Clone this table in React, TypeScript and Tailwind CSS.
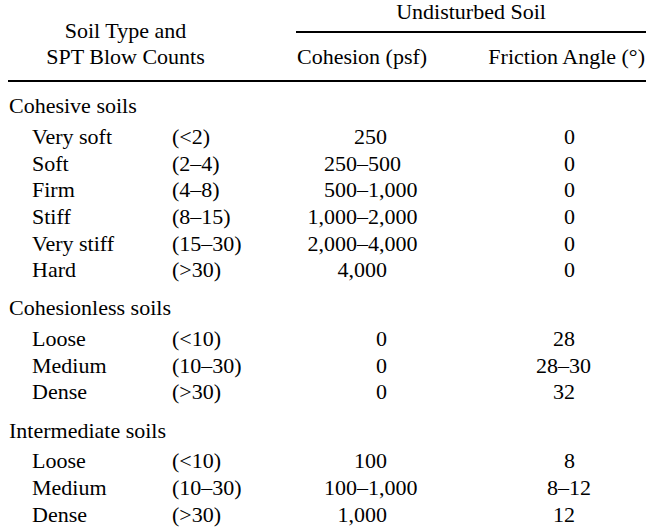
// Soil strength parameters by soil type and SPT blow counts

type Row = { name: string; spt: string; cohesion: string; friction: string }
type Group = { title: string; rows: Row[] }

const GROUPS: Group[] = [
  {
    title: 'Cohesive soils',
    rows: [
      { name: 'Very soft', spt: '(<2)', cohesion: '250', friction: '0' },
      { name: 'Soft', spt: '(2–4)', cohesion: '250–500', friction: '0' },
      { name: 'Firm', spt: '(4–8)', cohesion: '500–1,000', friction: '0' },
      { name: 'Stiff', spt: '(8–15)', cohesion: '1,000–2,000', friction: '0' },
      { name: 'Very stiff', spt: '(15–30)', cohesion: '2,000–4,000', friction: '0' },
      { name: 'Hard', spt: '(>30)', cohesion: '4,000', friction: '0' },
    ],
  },
  {
    title: 'Cohesionless soils',
    rows: [
      { name: 'Loose', spt: '(<10)', cohesion: '0', friction: '28' },
      { name: 'Medium', spt: '(10–30)', cohesion: '0', friction: '28–30' },
      { name: 'Dense', spt: '(>30)', cohesion: '0', friction: '32' },
    ],
  },
  {
    title: 'Intermediate soils',
    rows: [
      { name: 'Loose', spt: '(<10)', cohesion: '100', friction: '8' },
      { name: 'Medium', spt: '(10–30)', cohesion: '100–1,000', friction: '8–12' },
      { name: 'Dense', spt: '(>30)', cohesion: '1,000', friction: '12' },
    ],
  },
]

// Values line up on the en dash; single values sit flush right
function DashValue({ value, col }: { value: string; col: 'cohesion' | 'friction' }) {
  const [first, rest] = value.split('–')
  const isRange = rest !== undefined
  let box = ''
  if (col === 'cohesion') box = isRange ? 'w-[67px]' : 'w-[97px]'
  else box = isRange ? 'w-[88px]' : 'w-[105px]'

  return (
    <div className="flex whitespace-nowrap">
      <span className={`${box} text-right shrink-0`}>{first}</span>
      {isRange && <span>–{rest}</span>}
    </div>
  )
}

function GroupBlock({ group }: { group: Group }) {
  return (
    <div className="mt-[11.5px]">
      <div className="pl-[9px] mb-[4px]">{group.title}</div>
      {group.rows.map(r => (
        <div key={r.name + r.spt} className="flex">
          <div className="pl-[32px] w-[172px] shrink-0">{r.name}</div>
          <div className="w-[118px] shrink-0">{r.spt}</div>
          <div className="w-[180px] shrink-0">
            <DashValue value={r.cohesion} col="cohesion" />
          </div>
          <div className="flex-1">
            <DashValue value={r.friction} col="friction" />
          </div>
        </div>
      ))}
    </div>
  )
}

export default function App() {
  return (
    <div
      className="w-[651px] h-[532px] overflow-hidden bg-white text-black text-[22px] leading-[26.67px]"
      style={{ fontFamily: '"Liberation Serif", "Times New Roman", serif' }}
    >
      {/* Header */}
      <div className="flex">
        <div className="ml-[8px] w-[235px] pt-[18px] text-center leading-[26px]">
          Soil Type and
          <br />
          SPT Blow Counts
        </div>
        <div className="ml-[53px] w-[350px]">
          <div className="text-center leading-[24px]">Undisturbed Soil</div>
          <div className="mt-[7px] h-[2px] bg-black" />
          <div className="mt-[11px] flex justify-between px-[1px]">
            <span>Cohesion (psf)</span>
            <span>Friction Angle (°)</span>
          </div>
        </div>
      </div>
      <div className="mt-[9px] ml-[8px] w-[638px] h-[2px] bg-black" />

      {/* Body */}
      {GROUPS.map(g => <GroupBlock key={g.title} group={g} />)}
    </div>
  )
}
